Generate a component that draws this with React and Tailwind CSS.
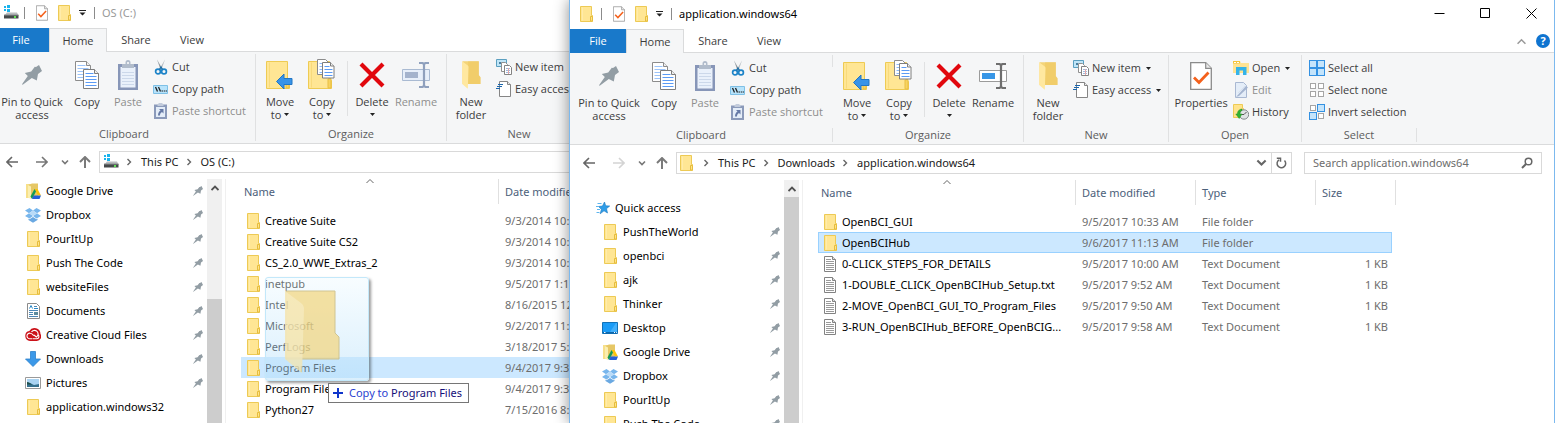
import React from "react";

/* ---------- icons ---------- */

const Folder = ({ className = "h-4 w-[13px]" }) => (
  <svg viewBox="0 0 13 16" className={className} aria-hidden="true">
    <path d="M.5.5h11v9h1v6H.5z" fill="#ffe694" stroke="#edca55" />
    <path d="M10.500 15V10.500h2V15z" fill="#ffe38a" stroke="#e6bd3d" />
    <path d="M2.500 1.500v13" stroke="#ffecaa" />
  </svg>
);

const Drive = () => (
  <svg viewBox="0 0 16 16" className="h-4 w-4" aria-hidden="true">
    <path d="M1 1h2v2H1zM4 0h3v3H4zM1 4h2v2H1zM4 4h3v3H4z" fill="#19b4ee" />
    <path d="M4 7.500h10l1.500 3H1.500z" fill="#b9bcbe" />
    <path d="M1 10h14.500v3.500H1z" fill="#45494b" />
    <path d="M1 9.500h14.500v1H1z" fill="#8b8f91" />
    <path d="M11 11h2v2h-2z" fill="#5fe052" />
  </svg>
);

const CheckDoc = ({ className = "h-4 w-3" }) => (
  <svg viewBox="0 0 22 28" className={className} aria-hidden="true">
    <path d="M.7.7h15l5.600 5.600v21H.7z" fill="#fff" stroke="#8b8b8b" strokeWidth="1.300" />
    <path d="M15.700.7v5.600h5.600" fill="#e9e9e9" stroke="#8b8b8b" strokeWidth="1.200" />
    <path d="M4 15.500l5 5 9.500-10" fill="none" stroke="#f4611c" strokeWidth="2.800" />
  </svg>
);

const Pin = ({ className }) => (
  <svg viewBox="0 0 20 20" className={className} aria-hidden="true">
    <path d="M17 0l3 6-4 3-1.200 6.500-3-1.500-2-1L.7 19.700 0 19.300l5.800-8.300L2.800 8l6.400-1.500 3.600-4.700L14 2z" fill="#929da4" />
  </svg>
);

const CopyDocs = () => (
  <svg viewBox="0 0 24 28" className="h-7 w-6" aria-hidden="true">
    <path d="M.5.5h11l4 4v15H.5z" fill="#fff" stroke="#8c8c8c" />
    <path d="M11.500.5v4h4" fill="#eee" stroke="#8c8c8c" />
    <path d="M2.500 4.500h8M2.500 7.500h11M2.500 10.500h6M2.500 13.500h6M2.500 16.500h6" stroke="#9cc4fa" />
    <path d="M8.500 8.500h11l4 4v15h-15z" fill="#fff" stroke="#7e7e7e" />
    <path d="M19.500 8.500v4h4" fill="#eee" stroke="#7e7e7e" />
    <path d="M10.500 12.500h8M10.500 15.500h11M10.500 18.500h11M10.500 21.500h11M10.500 24.500h11" stroke="#5b9bf5" />
  </svg>
);

const PasteIcon = () => (
  <svg viewBox="0 0 20 30" className="h-[30px] w-5" aria-hidden="true">
    <path d="M0 4h20v26H0z" fill="#8796b8" />
    <path d="M2.500 7h15v20.500h-15z" fill="#eaf1fb" />
    <path d="M4 12.500h12M4 15.500h12M4 18.500h12M4 21.500h12M4 24.500h12" stroke="#ccd8ea" />
    <path d="M4 4h3.500V2.500a2.500 2.500 0 015 0V4H16v4H4z" fill="#b1bccb" />
    <circle cx="10" cy="3" r="1" fill="#fff" />
  </svg>
);

const CutIcon = () => (
  <svg viewBox="0 0 16 16" className="h-4 w-4" aria-hidden="true">
    <path d="M4 .5l5.500 9.500-2 .5z" fill="#8f989e" />
    <path d="M12 .5L6.500 10l2 .5z" fill="#b6bdc2" />
    <circle cx="5" cy="12.500" r="2.400" fill="none" stroke="#1c83c8" strokeWidth="1.700" />
    <circle cx="11" cy="12.500" r="2.400" fill="none" stroke="#1c83c8" strokeWidth="1.700" />
    <path d="M6.500 10.500L8 8l1.500 2.500" fill="none" stroke="#1c6da5" strokeWidth="1.400" />
  </svg>
);

const CopyPathIcon = () => (
  <svg viewBox="0 0 16 16" className="h-4 w-4" aria-hidden="true">
    <path d="M.5 4.500h14v8H.5z" fill="#b7e3fb" stroke="#7ec0e6" />
    <path d="M2.500 6l2 4.500M5.500 6l2 4.500" stroke="#222" strokeWidth="1.300" />
    <path d="M8.500 9.500H10v1H8.500zM10.700 9.500h1.300v1h-1.300zM12.600 9.500H14v1h-1.400z" fill="#222" />
  </svg>
);

const PasteShortcutIcon = () => (
  <svg viewBox="0 0 16 16" className="h-4 w-4" aria-hidden="true">
    <path d="M1 1.500h13V16H1z" fill="#8b9aba" />
    <path d="M3 4h9v10H3z" fill="#e4edf8" />
    <path d="M4.500 1.500L6 0h3l1.500 1.500V3h-6z" fill="#c2cbdb" />
    <path d="M6 6h4.500v4.500L9 9c-1.500 1-2 2-2 3.500H5C5 10 6 8.500 7.500 7.500z" fill="#667aa6" />
  </svg>
);

const BigFolder = () => (
  <>
    <path d="M.5 2.500h21v19h2v8H.5z" fill="#ffe694" stroke="#eecb54" />
    <path d="M3.500 3.500v25" stroke="#f8da7c" />
    <path d="M20 28.500v-8.500l3-.5v9.500h-3z" fill="#f7d361" stroke="#e9bf43" />
  </>
);

const MoveToIcon = () => (
  <svg viewBox="0 0 28 31" className="h-[31px] w-7" aria-hidden="true">
    <BigFolder />
    <path d="M10.500 22.500l7.500-7.500v4.500h8v6h-8V30z" fill="#3793e8" stroke="#2276c4" />
  </svg>
);

const CopyToIcon = () => (
  <svg viewBox="0 0 28 31" className="h-[31px] w-7" aria-hidden="true">
    <BigFolder />
    <path d="M9.500.5h8l3 3v12h-11z" fill="#fff" stroke="#8c8c8c" />
    <path d="M11.500 4.500h6M11.500 7.500h3M11.500 10.500h3M11.500 13.500h3" stroke="#8dbaf7" />
    <path d="M14.500 3.500h8l3.500 3.500v12H14.500z" fill="#fff" stroke="#7e7e7e" />
    <path d="M22.500 3.500V7h3.500" fill="#eee" stroke="#7e7e7e" />
    <path d="M16.500 7.500h5M16.500 10.500h8M16.500 13.500h8M16.500 16.500h8" stroke="#5b9bf5" />
  </svg>
);

const DeleteIcon = () => (
  <svg viewBox="0 0 26 28" className="h-7 w-[26px]" aria-hidden="true">
    <path d="M2 3l22 22M24 3L2 25" stroke="#e1070d" strokeWidth="4.200" />
  </svg>
);

const RenameIcon = ({ disabled }) => (
  <svg viewBox="0 0 28 28" className="h-7 w-7" aria-hidden="true">
    <path d="M.5 8.500h27v11H.5z" fill={disabled ? "#e7effa" : "#fff"} stroke={disabled ? "#a9bad2" : "#9b9b9b"} />
    <path d="M3 11h13v6H3z" fill={disabled ? "#a4b3cd" : "#3896e6"} />
    <path d="M17 2h3.500l1.500 1 1.500-1H27M17 26h3.500l1.500-1 1.500 1H27M22 3v22" fill="none" stroke={disabled ? "#8fa0bd" : "#6e6e6e"} strokeWidth="2.200" />
  </svg>
);

const OpenFolder = ({ className }) => (
  <svg viewBox="0 0 56 84" className={className} aria-hidden="true">
    <path d="M1 1h49v42l5 6v20H1z" fill="#f4d478" />
    <path d="M18 1h32v42l5 6v20H18z" fill="#edc55c" opacity=".5" />
    <path d="M0 1l16 12q3 2 3 5l-2 65L0 69z" fill="#ffe8a0" />
  </svg>
);

const DragFolder = ({ className }) => (
  <svg viewBox="0 0 56 84" className={className} aria-hidden="true">
    <path d="M1 1h49v42l4 4v22H1z" fill="#f3d680" fillOpacity=".9" stroke="#c9b878" />
    <path d="M0 1l16 12q3 2 3 5l-2 65L0 69z" fill="#f7e6ac" fillOpacity=".9" />
  </svg>
);

const NewItemIcon = () => (
  <svg viewBox="0 0 16 16" className="h-4 w-4" aria-hidden="true">
    <path d="M.5.5h10v7H.5z" fill="#bfe5f8" stroke="#5b9fc0" />
    <path d="M3 3h2v2H3zM6 3h2v2H6z" fill="#487f9f" />
    <path d="M5.500 3.500h4l2 2v7h-6z" fill="#fff" stroke="#909090" />
    <path d="M8.500 6.500h5l2 2v7h-7z" fill="#fff" stroke="#838383" />
    <path d="M10 9.500h4M10 11.500h4M10 13.500h4" stroke="#9fb9dc" />
    <path d="M12.500 9v6" stroke="#e7a9a9" />
  </svg>
);

const EasyAccessIcon = () => (
  <svg viewBox="0 0 16 16" className="h-4 w-4" aria-hidden="true">
    <path d="M3.500.5h8l3 3v12h-11z" fill="#fff" stroke="#858585" />
    <path d="M11.500.5v3h3" fill="#eee" stroke="#858585" />
    <path d="M2 3.500h5M1 5.500h5M0 7.500h4" stroke="#1b66ac" />
  </svg>
);

const OpenIcon = () => (
  <svg viewBox="0 0 16 16" className="h-4 w-4" aria-hidden="true">
    <path d="M0 1h7l1 2h8v10H0z" fill="#ffe392" />
    <path d="M0 1h7v2.500H0z" fill="#f5c43b" />
    <path d="M1 2h2v1H1zM4 2h2v1H4z" fill="#fff" />
    <path d="M3 7h10.500v8H10v-4.500H6.500V15H3z" fill="#35b3e8" />
  </svg>
);

const EditIcon = () => (
  <svg viewBox="0 0 16 16" className="h-4 w-4" aria-hidden="true">
    <path d="M2.500.5h8l3 3v12h-11z" fill="#e4edf8" stroke="#a9b8d2" />
    <path d="M3 15L13 4l2 1.500L6 14z" fill="#a5b5d0" />
    <path d="M5 11l7-7" stroke="#d8e2f0" />
  </svg>
);

const HistoryIcon = () => (
  <svg viewBox="0 0 16 16" className="h-4 w-4" aria-hidden="true">
    <path d="M.5.5h9v4h1v9H.5z" fill="#ffe38c" stroke="#eecb54" />
    <circle cx="11" cy="10.500" r="4.700" fill="#dfe3e5" stroke="#83898c" />
    <path d="M11 10.500l2.500-2.500M11 10.500H8.500" stroke="#555" />
    <path d="M9 5C5.500 5.500 4.500 7.500 4.500 10H2.800l3.400 4.500L9 10H7c0-2 .5-3 2-3.500z" fill="#31b431" stroke="#1f8e26" strokeWidth=".5" />
  </svg>
);

const SelectIcon = ({ on }) => (
  <svg viewBox="0 0 16 16" className="h-4 w-4" aria-hidden="true">
    {[[0, 0], [8, 0], [0, 8], [8, 8]].map(([x, y], i) =>
      on[i] ? (
        <rect key={i} x={x + 0.5} y={y + 0.5} width="7" height="7" fill="#c4e4fb" stroke="#3391e2" />
      ) : (
        <rect key={i} x={x + 1.5} y={y + 1.5} width="5" height="5" fill="#fff" stroke="#a5a5a5" />
      )
    )}
  </svg>
);

const GoogleDrive = () => (
  <svg viewBox="0 0 16 16" className="h-4 w-4" aria-hidden="true">
    <path d="M1 1h5v14H1z" fill="#f7e08a" />
    <path d="M3 2l4-1.500h6V14l-8 1z" fill="#e6c766" />
    <path d="M3 2l3 1.500V16L3 14.500z" fill="#fbeeb0" />
    <path d="M9.500 6h3l3.500 6.500h-3z" fill="#fdc30a" />
    <path d="M9.500 6L5.500 13.500 7 16l4-7.500z" fill="#159a56" />
    <path d="M8.500 12.500H16L14.500 16H7z" fill="#2660d8" />
  </svg>
);

const Dropbox = () => (
  <svg viewBox="0 0 16 16" className="h-4 w-4" aria-hidden="true">
    <path d="M4.500 1L8 3.500 4 6.300 0 3.500zM11.500 1L16 3.500l-4 2.800-4-2.800zM4 6.300L8 9l-3.500 2.500L0 9zM12 6.300L16 9l-4.500 2.500L8 9z" fill="#78b6ec" />
    <path d="M8 3.500l4 2.800L8 9 4 6.300z" fill="#b9dbf8" />
    <path d="M3.500 11.500l1 .7L8 10l3.500 2.200 1-.7V13L8 15.800 3.500 13z" fill="#6ba9e2" />
  </svg>
);

const DocumentIcon = () => (
  <svg viewBox="0 0 13 16" className="h-4 w-[13px]" aria-hidden="true">
    <path d="M.5.5h9l3 3v12H.5z" fill="#fff" stroke="#8b8b8b" />
    <path d="M7 3.500h3M2 7.500h9M2 9.500h4M2 11.500h4M2 13.500h9" stroke="#4d88b5" />
    <path d="M2.500 5.500L4 2.500l1.500 3M7 5.500h4" fill="none" stroke="#2b89c8" />
    <path d="M7 9h4v3H7z" fill="#5c8b9d" />
  </svg>
);

const TextDoc = () => (
  <svg viewBox="0 0 13 16" className="h-4 w-[13px]" aria-hidden="true">
    <path d="M.5.5h8l3 3v12H.5z" fill="#fff" stroke="#828282" />
    <path d="M8.500.5v3h3" fill="#ddd" stroke="#828282" />
    <path d="M2 3.500h5M2 5.500h8M2 7.500h8M2 9.500h8M2 11.500h8M2 13.500h8" stroke="#9a9a9a" />
  </svg>
);

const CreativeCloud = () => (
  <svg viewBox="0 0 16 16" className="h-4 w-4" aria-hidden="true">
    <path d="M5 14a5 5 0 01-.7-9.900A6 6 0 0115.500 7a4.500 4.500 0 01-3.700 7z" fill="#cb1119" />
    <g fill="none" stroke="#fff" strokeWidth="1.100">
      <path d="M7.500 11.700H5.300a2.800 2.800 0 110-5.500c1.500 0 2.500 1.200 3.500 2.500" />
      <path d="M6.500 5a3.600 3.600 0 116 4l-1.200 1L9 8" />
      <path d="M8 11.700h4a2.200 2.200 0 001-4" />
    </g>
  </svg>
);

const DownloadIcon = () => (
  <svg viewBox="0 0 16 16" className="h-4 w-4" aria-hidden="true">
    <path d="M5.500.5h5v7.500H15.500L8 15.500.5 8h5z" fill="#3b98e8" stroke="#2b80cb" strokeWidth=".8" />
  </svg>
);

const PicturesIcon = () => (
  <svg viewBox="0 0 16 16" className="h-4 w-4" aria-hidden="true">
    <path d="M.5 2.500h15v11H.5z" fill="#fff" stroke="#9a9a9a" />
    <path d="M2 4h12v8H2z" fill="#a9d3f2" />
    <path d="M2 7.500l3 .5 4 2 5-1v3H2z" fill="#35708e" />
    <path d="M2 7l2 .5L7 9.500H2z" fill="#1d4f4b" />
  </svg>
);

const DesktopIcon = () => (
  <svg viewBox="0 0 16 16" className="h-4 w-4" aria-hidden="true">
    <path d="M.5 2.500h15v11H.5z" fill="#1b9cf7" stroke="#1272b8" />
    <path d="M8 12L14 3h1v9z" fill="#43b0fb" />
    <path d="M1 12h14v1.500H1z" fill="#0d67ab" />
    <path d="M2 12.500h1.500M12 12.500h1M14 12.500h.8" stroke="#fff" />
  </svg>
);

const QuickStar = () => (
  <svg viewBox="0 0 14 14" className="h-[14px] w-[14px]" aria-hidden="true">
    <path d="M8.500 1l1.200 3.800 4 .2-3.200 2.700 1 4.300-3.500-2.200-3.800 3 1.200-4.500L2.500 5.500l4-.5z" fill="#2f9de8" stroke="#1877c0" strokeWidth=".6" />
    <path d="M1.500 2.500h4M0 5.500h3M1 8.500h3M.5 11.500h3" stroke="#5db5ee" />
  </svg>
);

const Caret = () => (
  <svg viewBox="0 0 5 3" className="h-[3px] w-[5px]" aria-hidden="true">
    <path d="M0 0h5L2.500 3z" fill="#222" />
  </svg>
);

const Arrow = ({ dir, color = "#666" }) => (
  <svg viewBox="0 0 12 12" className="h-3 w-3" fill="none" stroke={color} strokeWidth="1.600" aria-hidden="true">
    {dir === "left" && <path d="M12 6H1M6 1L1 6l5 5" />}
    {dir === "right" && <path d="M0 6h11M6 1l5 5-5 5" />}
    {dir === "up" && <path d="M6 12V1M1 6l5-5 5 5" stroke="#7a7a7a" strokeWidth="2" />}
  </svg>
);

const Chevron = ({ dir, className, color = "#666", width = 1.4 }) => (
  <svg viewBox="0 0 8 8" className={className} fill="none" stroke={color} strokeWidth={width} aria-hidden="true">
    {dir === "down" && <path d="M1 2.500l3 3 3-3" />}
    {dir === "up" && <path d="M.5 6L4 2.500 7.500 6" />}
    {dir === "right" && <path d="M2.500 1l3 3-3 3" />}
  </svg>
);

/* ---------- ribbon ---------- */

const Big = ({ icon, lines, caret, disabled, className }) => (
  <button
    disabled={disabled}
    className={`flex shrink-0 flex-col items-center whitespace-nowrap pt-2 leading-[13px] ${disabled ? "text-[#8e8e8e]" : "text-[#3c3c3c]"} ${className}`}
  >
    <span className="mb-1.5 flex h-[29px] items-center justify-center">{icon}</span>
    {lines.map((line, i) => (
      <span key={line} className="flex items-center gap-[3px]">
        {line}
        {caret && lines.length > 1 && i === lines.length - 1 && <Caret />}
      </span>
    ))}
    {caret && lines.length === 1 && (
      <span className="flex h-[13px] items-center">
        <Caret />
      </span>
    )}
  </button>
);

const Small = ({ icon, label, caret, disabled }) => (
  <button
    disabled={disabled}
    className={`flex h-[22px] items-center gap-[3px] whitespace-nowrap ${disabled ? "text-[#8e8e8e]" : "text-[#3c3c3c]"}`}
  >
    {icon}
    <span>{label}</span>
    {caret && <span className="ml-0.5"><Caret /></span>}
  </button>
);

const Group = ({ label, className, sep = "full", children }) => (
  <div className={`flex shrink-0 ${className}`}>
    <div className="flex grow flex-col">
      <div className="flex h-[74px]">{children}</div>
      <div className="text-center leading-4 text-[#5c5c5c]">{label}</div>
    </div>
    <div className="my-0.5 flex w-px flex-col justify-between">
      {sep === "full" && <div className="w-px grow bg-[#e0e1e2]" />}
      {sep === "ends" && <div className="h-3 w-px bg-[#e0e1e2]" />}
      {sep === "bottom" && <div />}
      {sep !== "full" && <div className="h-[14px] w-px bg-[#e0e1e2]" />}
    </div>
  </div>
);

const Ribbon = ({ active }) => (
  <div className="flex h-[92px] shrink-0 overflow-hidden border-b border-[#dadbdc] bg-[#f5f6f7] font-['Open_Sans',sans-serif]">
    <Group label="Clipboard" className="w-[263px]" sep={active ? "ends" : "full"}>
      <Big className="ml-1 w-[70px]" icon={<Pin className="h-5 w-5" />} lines={["Pin to Quick", "access"]} />
      <Big className="w-10" icon={<CopyDocs />} lines={["Copy"]} />
      <Big className="w-[42px]" icon={<PasteIcon />} lines={["Paste"]} disabled />
      <div className="ml-1 flex flex-col pt-1">
        <Small icon={<CutIcon />} label="Cut" />
        <Small icon={<CopyPathIcon />} label="Copy path" />
        <Small icon={<PasteShortcutIcon />} label="Paste shortcut" disabled />
      </div>
    </Group>
    <Group label="Organize" className="w-[191px]">
      <Big className="ml-[3px] w-[42px]" icon={<MoveToIcon />} lines={["Move", "to"]} caret />
      <Big className="w-[42px]" icon={<CopyToIcon />} lines={["Copy", "to"]} caret />
      <div className="ml-1 mt-[9px] h-[55px] w-px shrink-0 bg-[#e0e1e2]" />
      <Big className="ml-[3px] w-[42px]" icon={<DeleteIcon />} lines={["Delete"]} caret />
      <Big className="w-[46px]" icon={<RenameIcon disabled={!active} />} lines={["Rename"]} disabled={!active} />
    </Group>
    <Group label="New" className="w-[145px]">
      <Big className="ml-0.5 w-11" icon={<OpenFolder className="h-7 w-[19px]" />} lines={["New", "folder"]} />
      <div className="ml-[3px] flex flex-col pt-1">
        <Small icon={<NewItemIcon />} label="New item" caret />
        <Small icon={<EasyAccessIcon />} label="Easy access" caret />
      </div>
    </Group>
    {active && (
      <>
        <Group label="Open" className="w-[133px]">
          <Big className="ml-0.5 w-[60px]" icon={<CheckDoc className="h-7 w-[22px]" />} lines={["Properties"]} />
          <div className="ml-0.5 flex flex-col pt-1">
            <Small icon={<OpenIcon />} label="Open" caret />
            <Small icon={<EditIcon />} label="Edit" disabled />
            <Small icon={<HistoryIcon />} label="History" />
          </div>
        </Group>
        <Group label="Select" className="w-[115px]" sep="bottom">
          <div className="ml-[7px] flex flex-col pt-1">
            <Small icon={<SelectIcon on={[1, 1, 1, 1]} />} label="Select all" />
            <Small icon={<SelectIcon on={[0, 0, 0, 0]} />} label="Select none" />
            <Small icon={<SelectIcon on={[0, 1, 1, 0]} />} label="Invert selection" />
          </div>
        </Group>
      </>
    )}
  </div>
);

/* ---------- window parts ---------- */

const TitleBar = ({ icon, title, active }) => (
  <div className="flex h-[29px] shrink-0 items-center pb-0.5 pl-[10px]">
    <span className="flex w-4 items-center">{icon}</span>
    <span className="ml-[5px] h-3 w-px bg-[#8b8b8b]" />
    <button aria-label="Properties" className="ml-[11px]"><CheckDoc /></button>
    <button aria-label="New folder" className="ml-[10px]"><Folder /></button>
    <button aria-label="Customize Quick Access Toolbar" className="ml-2">
      <svg viewBox="0 0 7 6" className="h-1.5 w-[7px]" aria-hidden="true">
        <path d="M0 0h7v1H0zM.5 2.500h6L3.500 5.500z" fill="#222" />
      </svg>
    </button>
    <span className="ml-2 h-3 w-px bg-[#8b8b8b]" />
    <h1 className={`ml-[7px] ${active ? "text-black" : "text-[#999]"}`}>{title}</h1>
    {active && (
      <div className="ml-auto flex">
        {[
          ["Minimize", "M.5 5.500h10"],
          ["Maximize", "M.5.5h9v9h-9z"],
          ["Close", "M.5.5l10 10M10.500.5l-10 10"],
        ].map(([name, d]) => (
          <button key={name} aria-label={name} className="flex h-[27px] w-[46px] items-center justify-center">
            <svg viewBox="0 0 11 11" className="h-[11px] w-[11px]" aria-hidden="true">
              <path d={d} fill="none" stroke="#000" />
            </svg>
          </button>
        ))}
      </div>
    )}
  </div>
);

const Tabs = ({ active }) => (
  <div className="flex h-6 shrink-0 items-stretch font-['Open_Sans',sans-serif] text-[#3c3c3c] shadow-[inset_0_-1px_0_#dadbdc]">
    <button className="w-14 bg-[#1979ca] text-white">File</button>
    <button className="w-[58px] border-x border-t border-[#dadbdc] bg-[#f5f6f7]">Home</button>
    <button className="w-[58px]">Share</button>
    <button className="w-[54px]">View</button>
    {active && (
      <div className="ml-auto flex items-center gap-[10px] pr-1">
        <button aria-label="Minimize the Ribbon">
          <Chevron dir="up" className="h-[9px] w-[9px]" color="#9a9a9a" />
        </button>
        <button aria-label="Help" className="h-[14px] w-[14px] rounded-full bg-[#0f74d0] text-[11px] font-bold leading-[14px] text-white">
          ?
        </button>
      </div>
    )}
  </div>
);

const AddressBar = ({ icon, path, active }) => (
  <div className="flex h-[35px] shrink-0 items-center pl-[13px] pr-3">
    <button aria-label="Back"><Arrow dir="left" /></button>
    <button aria-label="Forward" className="ml-[18px]">
      <Arrow dir="right" color={active ? "#d4d4d4" : "#777"} />
    </button>
    <button aria-label="Recent locations" className="ml-[13px]">
      <Chevron dir="down" className="h-2 w-2" color="#777" width={1.6} />
    </button>
    <button aria-label="Up" className="ml-[10px]"><Arrow dir="up" /></button>
    <nav aria-label="Address" className="ml-2 flex h-[22px] min-w-0 grow items-center border border-[#d9d9d9] pl-[3px]">
      <span className="flex w-4 items-center">{icon}</span>
      {path.map((p) => (
        <React.Fragment key={p}>
          <Chevron dir="right" className="ml-1.5 mr-2 h-2 w-2 shrink-0" />
          <button className="whitespace-nowrap text-[#1a1a1a]">{p}</button>
        </React.Fragment>
      ))}
      {active && (
        <>
          <button aria-label="Previous locations" className="ml-auto mr-1">
            <Chevron dir="down" className="h-[11px] w-[11px]" width={1.5} />
          </button>
          <button aria-label="Refresh" className="flex h-5 w-5 items-center justify-center border-l border-[#d9d9d9]">
            <svg viewBox="0 0 11 12" className="h-3 w-[11px]" fill="none" stroke="#666" strokeWidth="1.500" aria-hidden="true">
              <path d="M3 2.800a4.300 4.300 0 105.500.6M.8 1.200H4.500v3.500" />
            </svg>
          </button>
        </>
      )}
    </nav>
    {active && (
      <form role="search" className="ml-3 flex h-[22px] w-[238px] items-center border border-[#d9d9d9] pl-2 pr-2">
        <input
          type="search"
          aria-label="Search application.windows64"
          placeholder="Search application.windows64"
          className="min-w-0 grow bg-transparent outline-none placeholder:text-[#6d6d6d]"
        />
        <svg viewBox="0 0 12 12" className="h-3 w-3" fill="none" stroke="#666" aria-hidden="true">
          <circle cx="7.500" cy="4.500" r="3.300" strokeWidth="1.500" />
          <path d="M5 7L1 11" strokeWidth="2" />
        </svg>
      </form>
    )}
  </div>
);

const Sidebar = ({ items, root, thumb }) => (
  <aside className="flex w-[233px] shrink-0 border-r border-[#f0f0f0] pr-[3px]">
    <ul className={`min-w-0 grow ${root ? "pt-4" : ""}`}>
      {root && (
        <li>
          <a href="#quick" className="flex h-6 items-center gap-[5px] pl-[26px]">
            <QuickStar />
            {root}
          </a>
        </li>
      )}
      {items.map(([name, icon, unpinned]) => (
        <li key={name}>
          <a href="#item" className="flex h-6 items-center pl-8 pr-1">
            <span className="flex w-[21px] items-center">
              <span className="flex w-4 justify-center">{icon}</span>
            </span>
            <span className="grow whitespace-nowrap">{name}</span>
            {!unpinned && <Pin className="h-[10px] w-[10px]" />}
          </a>
        </li>
      ))}
    </ul>
    <div className="flex w-[15px] flex-col bg-[#f0f0f0]">
      <span className="flex h-[17px] shrink-0 items-center justify-center">
        <Chevron dir="up" className="h-2 w-2" color="#505050" width={1.8} />
      </span>
      <div className={`grow bg-[#cdcdcd] ${thumb}`} />
    </div>
  </aside>
);

const FileTable = ({ rows, active }) => (
  <main className="min-w-0 grow pl-[15px]">
    <table className="w-[574px] table-fixed border-collapse text-left">
      <colgroup>
        <col className="w-[258px]" />
        <col className="w-[120px]" />
        <col className="w-[120px]" />
        <col className="w-[76px]" />
      </colgroup>
      <thead>
        <tr className="text-[#4c607a]">
          {["Name", "Date modified", "Type", "Size"].map((h, i) => (
            <th key={h} className="p-0 pb-1.5 font-normal">
              <div className={`relative flex h-[25px] items-center border-r border-[#e0e0e0] ${i === 0 ? "pl-[3px]" : "pl-1.5"} ${i === 3 ? "w-20" : ""}`}>
                {h}
                {i === 0 && (
                  <span className="absolute left-1/2 top-0 -translate-x-1/2">
                    <Chevron dir="up" className="-mt-0.5 h-2 w-2" color="#666" width={1} />
                  </span>
                )}
              </div>
            </th>
          ))}
        </tr>
      </thead>
      <tbody>
        {rows.map(([name, date, type, size, selected], i) => (
          <tr
            key={i}
            className={`h-[21px] ${selected ? (active ? "bg-[#cce8ff] outline outline-1 -outline-offset-1 outline-[#99d1ff]" : "bg-[#cce8ff]") : ""}`}
          >
            <td className="p-0 pl-1.5">
              <div className="flex h-[21px] items-center gap-[5px] whitespace-nowrap">
                {type === "Text Document" ? <TextDoc /> : <Folder />}
                <span>{name}</span>
              </div>
            </td>
            <td className="whitespace-nowrap p-0 pl-1.5 text-[#6d6d6d]">{date}</td>
            <td className="whitespace-nowrap p-0 pl-1.5 text-[#6d6d6d]">{type}</td>
            <td className="whitespace-nowrap p-0 pr-1 text-right text-[#6d6d6d]">{size}</td>
          </tr>
        ))}
      </tbody>
    </table>
  </main>
);

const ExplorerWindow = ({ active, title, icon, path, sidebar, rows, className }) => (
  <section className={`absolute bottom-0 flex flex-col overflow-hidden border-l bg-white ${className}`}>
    <TitleBar icon={icon} title={title} active={active} />
    <Tabs active={active} />
    <Ribbon active={active} />
    <AddressBar icon={icon} path={path} active={active} />
    <div className="flex min-h-0 grow overflow-hidden">
      <Sidebar {...sidebar} />
      <FileTable rows={rows} active={active} />
    </div>
  </section>
);

/* ---------- data ---------- */

const leftSidebar = {
  thumb: "mt-[103px]",
  items: [
    ["Google Drive", <GoogleDrive />],
    ["Dropbox", <Dropbox />],
    ["PourItUp", <Folder />],
    ["Push The Code", <Folder />],
    ["websiteFiles", <Folder />],
    ["Documents", <DocumentIcon />],
    ["Creative Cloud Files", <CreativeCloud />],
    ["Downloads", <DownloadIcon />],
    ["Pictures", <PicturesIcon />],
    ["application.windows32", <Folder />, true],
  ],
};

const rightSidebar = {
  root: "Quick access",
  thumb: "",
  items: [
    ["PushTheWorld", <Folder />],
    ["openbci", <Folder />],
    ["ajk", <Folder />],
    ["Thinker", <Folder />],
    ["Desktop", <DesktopIcon />],
    ["Google Drive", <GoogleDrive />],
    ["Dropbox", <Dropbox />],
    ["PourItUp", <Folder />],
    ["Push The Code", <Folder />],
  ],
};

const leftRows = [
  ["Creative Suite", "9/3/2014 10:"],
  ["Creative Suite CS2", "9/3/2014 10:"],
  ["CS_2.0_WWE_Extras_2", "9/3/2014 10:"],
  ["inetpub", "9/5/2017 1:1"],
  ["Intel", "8/16/2015 12"],
  ["Microsoft", "9/2/2017 11:"],
  ["PerfLogs", "3/18/2017 5:"],
  ["Program Files", "9/4/2017 9:3", "", "", true],
  ["Program Files", "9/4/2017 9:3"],
  ["Python27", "7/15/2016 8:"],
  ["", ""],
];

const rightRows = [
  ["OpenBCI_GUI", "9/5/2017 10:33 AM", "File folder", ""],
  ["OpenBCIHub", "9/6/2017 11:13 AM", "File folder", "", true],
  ["0-CLICK_STEPS_FOR_DETAILS", "9/5/2017 10:00 AM", "Text Document", "1 KB"],
  ["1-DOUBLE_CLICK_OpenBCIHub_Setup.txt", "9/5/2017 9:52 AM", "Text Document", "1 KB"],
  ["2-MOVE_OpenBCI_GUI_TO_Program_Files", "9/5/2017 9:50 AM", "Text Document", "1 KB"],
  ["3-RUN_OpenBCIHub_BEFORE_OpenBCIG...", "9/5/2017 9:58 AM", "Text Document", "1 KB"],
];

export default function App() {
  return (
    <div className="relative h-screen overflow-hidden bg-white font-['Noto_Sans','Open_Sans',sans-serif] text-[11px] leading-4 text-black">
      <ExplorerWindow
        className="-left-2 -top-px w-[640px] border-white"
        title="OS (C:)"
        icon={<Drive />}
        path={["This PC", "OS (C:)"]}
        sidebar={leftSidebar}
        rows={leftRows}
      />

      {/* dragged folder and its drop hint */}
      <div className="absolute left-[265px] top-[277px] flex h-[104px] w-[104px] justify-center rounded-[3px] border border-[#c3e8fa] bg-linear-to-b from-[#eefaff70] to-[#b5dffa80] pt-3 shadow-[2px_2px_3px_rgba(0,0,0,0.4)]">
        <DragFolder className="mr-2 h-[84px] w-14 opacity-80" />
      </div>
      <div className="absolute left-[328px] top-[383px] flex h-5 items-center gap-1.5 whitespace-nowrap border border-[#767676] bg-white pl-1 pr-1.5 text-[#15107a]">
        <svg viewBox="0 0 10 10" className="h-[10px] w-[10px]" aria-hidden="true">
          <path d="M5 0v10M0 5h10" stroke="#1036cb" strokeWidth="2" />
        </svg>
        <span><span className="text-[#2b3fd0]">Copy to</span> Program Files</span>
      </div>

      <ExplorerWindow
        active
        className="left-[569px] right-0 top-0 border-r border-[#7cb9ee] shadow-[0_0_14px_rgba(0,0,0,0.45)]"
        title="application.windows64"
        icon={<Folder />}
        path={["This PC", "Downloads", "application.windows64"]}
        sidebar={rightSidebar}
        rows={rightRows}
      />
    </div>
  );
}
